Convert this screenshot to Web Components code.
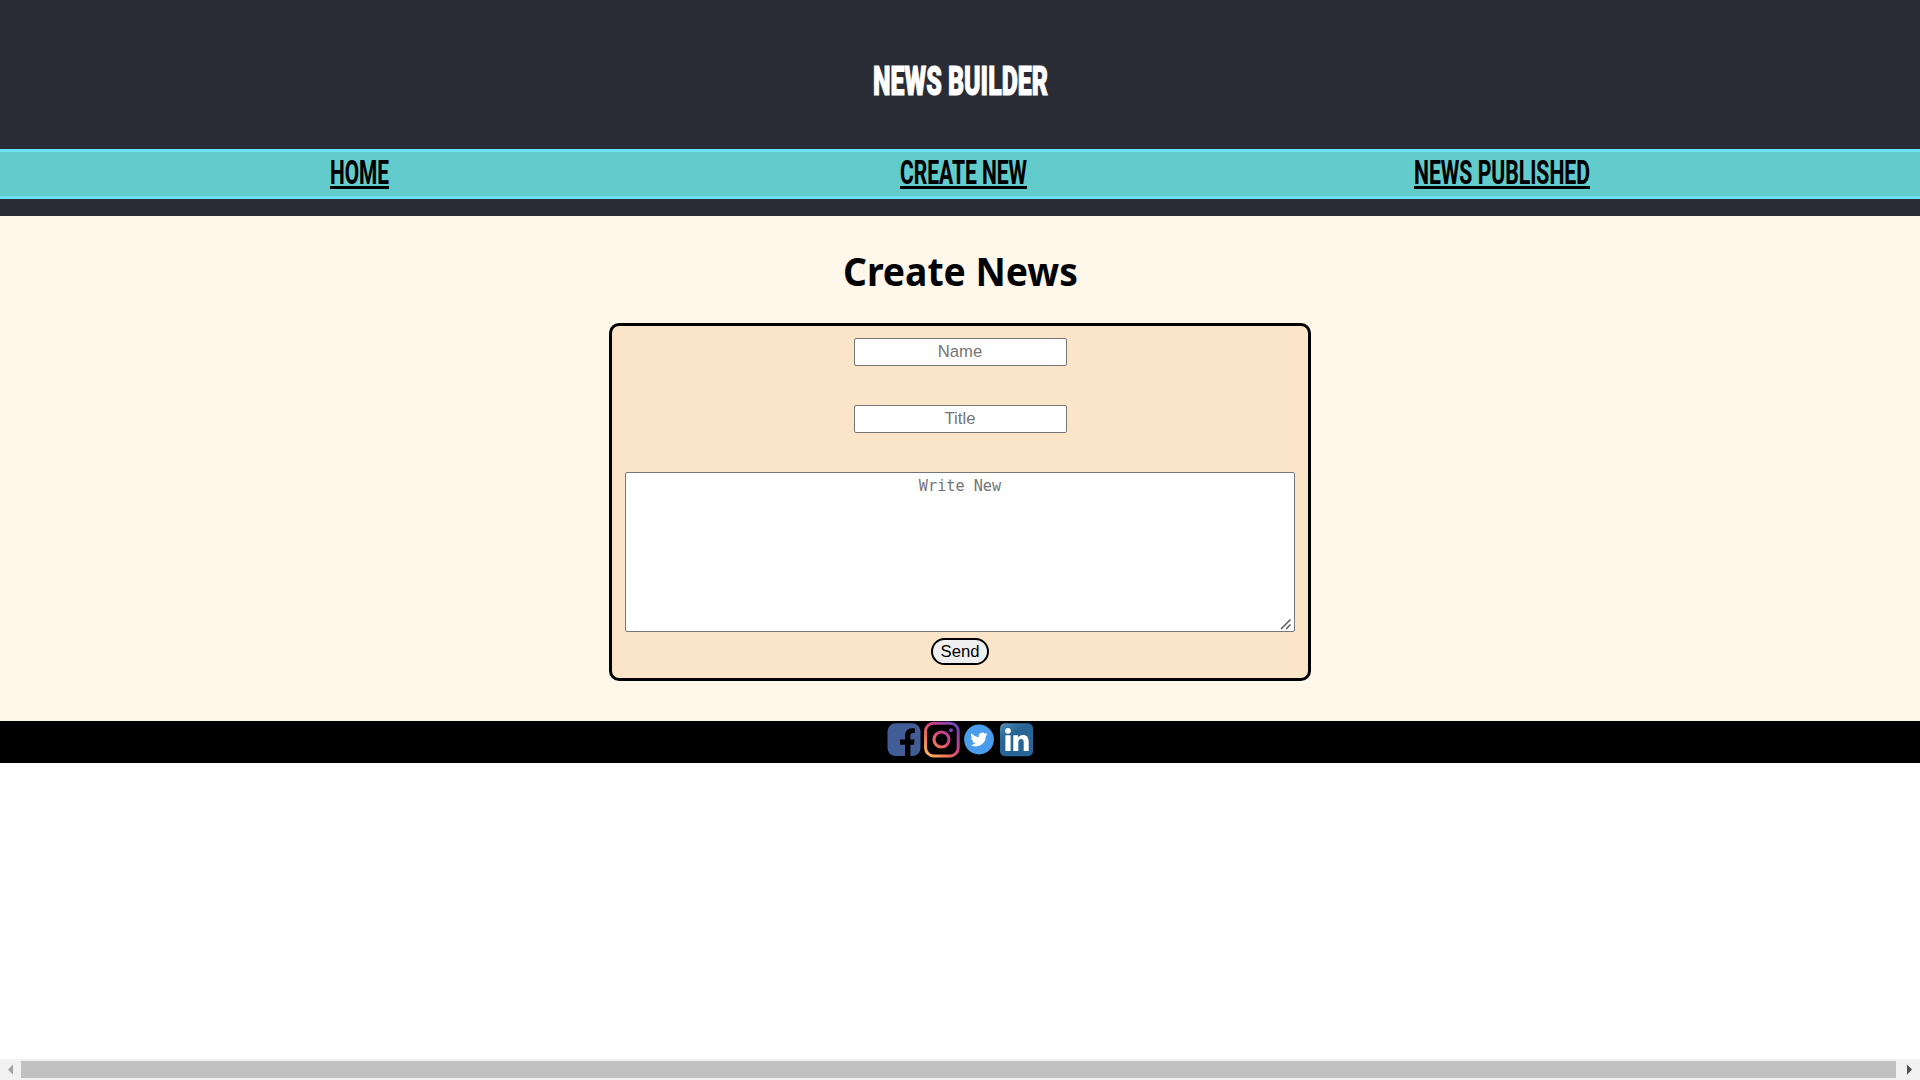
<!DOCTYPE html>
<html lang="en">
<head>
<meta charset="utf-8">
<title>News Builder</title>
<style>
html,body{margin:0;height:100%;overflow:hidden;background:#fff}
body{font-family:"Liberation Sans",Arial,sans-serif;color:#000}
</style>
</head>
<body>
<news-app></news-app>
<script>
const define=(name,html)=>{
  const t=document.createElement('template');t.innerHTML=html;
  customElements.define(name,class extends HTMLElement{
    constructor(){super();this.attachShadow({mode:'open'}).append(t.content.cloneNode(true));}
  });
};

// Text set in one line and condensed to a given advance width.
customElements.define('fit-text',class extends HTMLElement{
  connectedCallback(){
    const a=n=>this.getAttribute(n), w=+a('width'), h=+a('height');
    const r=this.attachShadow({mode:'open'});
    r.innerHTML=`<style>:host{display:block;width:${w}px;height:${h}px}svg{display:block;overflow:visible}
      text{font-family:${a('font')||'Roboto'},sans-serif;font-size:${a('size')}px;font-weight:${a('weight')||700};fill:currentColor;stroke:currentColor;stroke-width:${a('stroke')||0}px}</style>
      <svg width="${w}" height="${h}"><text x="0" y="${a('base')}" textLength="${w}" lengthAdjust="spacingAndGlyphs">${a('text')}</text></svg>`;
  }
});

define('nav-link',`<style>:host{display:block}a{display:block;color:#000;text-decoration:none;height:34px;border-bottom:3px solid #000;box-sizing:border-box}</style><a><slot></slot></a>`);

define('site-header',`<style>
:host{display:block;height:216px;background:#2a2c35;box-sizing:border-box}
.brand{height:149px;display:flex;justify-content:center;padding-top:60px;box-sizing:border-box;color:#fff}
nav{height:50px;box-sizing:border-box;border-top:3px solid #6fe0fa;border-bottom:3px solid #6fe0fa;background:#62cccc;display:flex;padding:3px 0 0 330px}
nav-link:nth-child(2){margin-left:511px}nav-link:nth-child(3){margin-left:387px}
</style>
<div class="brand"><fit-text text="NEWS BUILDER" width="175" height="40" base="35.4" size="41" weight="900" stroke="1.1"></fit-text></div>
<nav>
<nav-link><fit-text text="HOME" width="59" height="31" base="28.8" size="33.5" weight="700" stroke=".2"></fit-text></nav-link>
<nav-link><fit-text text="CREATE NEW" width="127" height="31" base="28.8" size="33.5" weight="700" stroke=".2"></fit-text></nav-link>
<nav-link><fit-text text="NEWS PUBLISHED" width="176" height="31" base="28.8" size="33.5" weight="700" stroke=".2"></fit-text></nav-link>
</nav>`);

define('news-form',`<style>
:host{display:block}
form{box-sizing:border-box;width:702px;height:358px;border:3px solid #000;border-radius:10px;background:#fae5c8;padding:12px 13px;display:flex;flex-direction:column;align-items:center}
input,textarea{box-sizing:border-box;margin:0 0 39px;border:1px solid #767676;border-radius:2px;text-align:center;background:#fff;outline:0}
input{width:213px;height:28px;padding:0 2px 1px;font:16.667px "Liberation Sans",sans-serif}
.area{position:relative;height:160px;margin-bottom:6px}
textarea{display:block;width:670px;height:160px;padding:4px 2px;margin:0;font:15.2px/18px "DejaVu Sans Mono",monospace;resize:none}
.grip{position:absolute;right:3px;bottom:2px}
::placeholder{color:#757575;opacity:1}
button{box-sizing:border-box;width:58px;height:27px;padding:0;border:2px solid #000;border-radius:14px;background:#efefef;color:#000;font:16.667px/21px "Liberation Sans",sans-serif}
</style>
<form><input placeholder="Name"><input placeholder="Title"><div class="area"><textarea placeholder="Write New"></textarea><svg class="grip" width="12" height="12"><path d="M1 11L10.5 1.5M6 11l4.5-4.5" stroke="#505050" stroke-width="1.4" fill="none"/></svg></div><button type="button">Send</button></form>`);

define('news-main',`<style>
:host{display:flex;flex-direction:column;align-items:center;height:505px;background:#fff7ea;box-sizing:border-box;padding-top:32px}
h1{margin:0;height:75px}
</style><h1><fit-text text="Create News" font="'Noto Sans'" width="235" height="50" base="37.5" size="39.5"></fit-text></h1><news-form></news-form>`);

define('social-footer',`<style>
:host{display:flex;height:42px;background:#000;justify-content:center}
svg{display:block}
</style>
<svg width="148" height="42" viewBox="886 721 148 42">
<defs>
<linearGradient id="ig" gradientUnits="userSpaceOnUse" x1="926" y1="757" x2="958" y2="723"><stop offset="0" stop-color="#ffc05c"/><stop offset=".3" stop-color="#f47a55"/><stop offset=".55" stop-color="#d4437e"/><stop offset="1" stop-color="#6245c0"/></linearGradient>
<linearGradient id="li" x1="0" y1="0" x2=".6" y2="1"><stop offset="0" stop-color="#6395b8"/><stop offset=".22" stop-color="#3474a1"/><stop offset=".4" stop-color="#286596"/></linearGradient>
</defs>
<rect x="887.5" y="723.3" width="33" height="32.7" rx="8" fill="#425c96"/>
<path d="M905 757V744.8h-5v-5.3h5v-3.2c0-5.2 2.8-8 7.2-8h2.6v4.7h-2c-1.8 0-2.4.9-2.4 2.5v4h4.2l-.8 5.3h-3.4V757z" fill="#000"/>
<rect x="925.6" y="723.2" width="32.6" height="32.7" rx="8" fill="none" stroke="url(#ig)" stroke-width="3"/>
<circle cx="941.5" cy="739.5" r="7.5" fill="none" stroke="url(#ig)" stroke-width="3.1"/>
<circle cx="951" cy="730.2" r="2" fill="#7549b0"/>
<circle cx="979" cy="739.5" r="14.9" fill="#4b9dec"/>
<path transform="translate(970.4 730.9) scale(.715)" fill="#fff" d="M24 4.6a10 10 0 0 1-2.8.8 5 5 0 0 0 2.1-2.7 10 10 0 0 1-3.1 1.2 4.9 4.9 0 0 0-8.4 4.5A14 14 0 0 1 1.7 3.2a4.9 4.9 0 0 0 1.5 6.5 5 5 0 0 1-2.2-.6 4.9 4.9 0 0 0 3.9 4.9 5 5 0 0 1-2.2.1 4.9 4.9 0 0 0 4.6 3.4A9.9 9.9 0 0 1 0 19.5a14 14 0 0 0 21.5-12.4A10 10 0 0 0 24 4.6z"/>
<rect x="1000" y="723.3" width="33" height="33" rx="5" fill="url(#li)"/>
<circle cx="1008" cy="730.8" r="2.9" fill="#fff"/>
<path d="M1005.4 735.3h5.2v15.7h-5.2zM1013.3 735.3h4.7v2.2c1-1.7 2.7-2.6 4.9-2.6 4.3 0 5.8 2.7 5.8 7v9.1h-5v-8.4c0-2.3-.6-3.5-2.4-3.5-2.1 0-3 1.4-3 3.7v8.2h-5z" fill="#fff"/>
</svg>`);

define('scroll-strip',`<style>
:host{display:flex;height:21px;background:#f1f1f1;align-items:center}
i{flex:1;height:17px;background:#c1c1c1}
svg{display:block}
</style><svg width="21" height="21"><path d="M13 5.5v10.2L8 10.6z" fill="#a3a3a3"/></svg><i></i><svg width="24" height="21"><path d="M11 5.5v10.2l5-5.1z" fill="#505050"/></svg>`);

define('news-app',`<style>:host{display:flex;flex-direction:column;height:100vh}scroll-strip{margin-top:auto}</style>
<site-header></site-header><news-main></news-main><social-footer></social-footer><scroll-strip></scroll-strip>`);
</script>
</body>
</html>
